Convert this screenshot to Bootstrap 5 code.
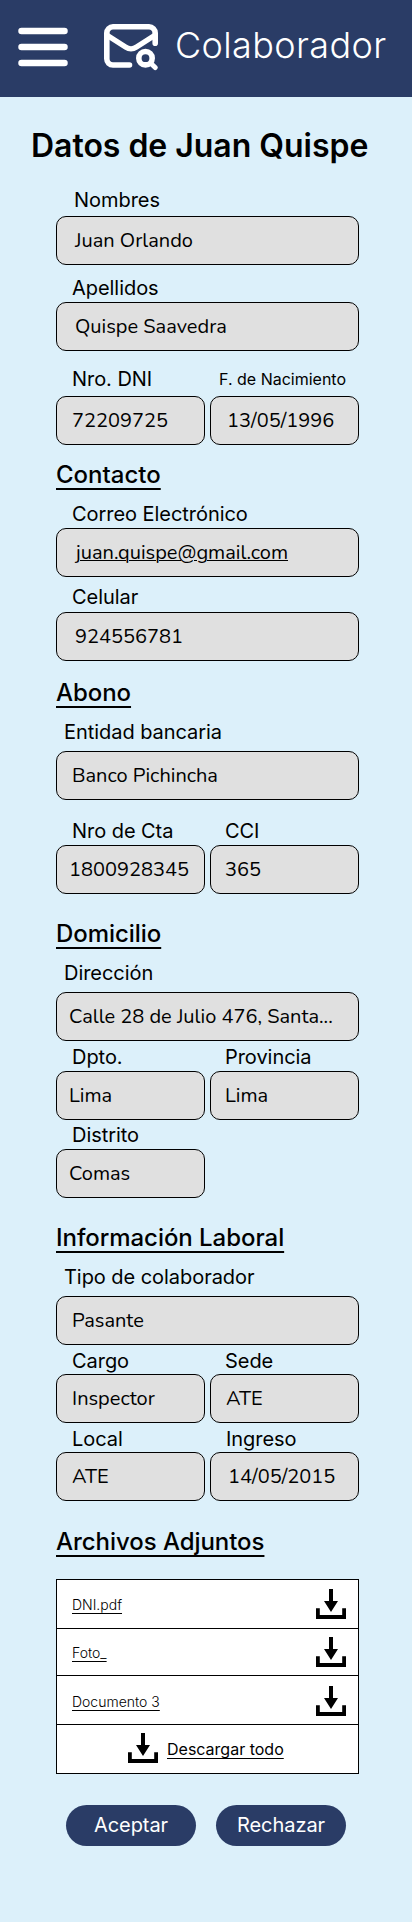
<!DOCTYPE html>
<html lang="es">
<head>
<meta charset="utf-8">
<meta name="viewport" content="width=device-width, initial-scale=1">
<title>Colaborador</title>
<link href="https://cdn.jsdelivr.net/npm/bootstrap@5.3.0/dist/css/bootstrap.min.css" rel="stylesheet">
<style>
  body { background: #dcf0fa; color: #000; font-family: Inter, "Liberation Sans", sans-serif; font-optical-sizing: none; min-height: 1922px; }
  .topbar { background: #2a3c66; height: 97px; }
  .burger { margin: 26px 0 0 18px; }
  .mail { margin: 24px 0 0 36px; }
  .brand-title { font-size: 36px; font-weight: 300; line-height: 44px; letter-spacing: .37px; margin: 23px 0 0 17px; }
  .page-title { font-size: 32px; font-weight: 600; line-height: 39px; letter-spacing: -.03px; margin: 29px 0 23px 31px; white-space: nowrap; }
  .sheet { width: 303px; margin-left: 56px; }
  .half { width: 149px; }
  .section-title { font-size: 24px; font-weight: 500; line-height: 29px; letter-spacing: -.05px; margin: 25px 0 13px; text-decoration: underline; text-decoration-thickness: 1.6px; text-underline-offset: 4.5px; white-space: nowrap; }
  .title-contact { margin-top: 15px; letter-spacing: 0; }
  .title-payment { margin-top: 17px; }
  .title-files { margin: 26px 0 23px; }
  .lbl { display: block; font-size: 20px; font-weight: 370; line-height: 24px; letter-spacing: -.05px; padding-left: 16px; margin-bottom: 2px; white-space: nowrap; }
  .lbl-in { padding-left: 8px; margin-bottom: 7px; }
  .lbl-first { padding-left: 18px; margin-bottom: 4px; }
  .half + .half .lbl { padding-left: 15px; }
  .half + .half .lbl-entry { padding-left: 16px; }
  .half + .half .lbl-small { font-size: 16px; font-weight: 400; padding-left: 9px; letter-spacing: 0; }
  .tight .lbl { margin-bottom: 1px; }
  .loose .lbl { margin-bottom: 5px; }
  .phone .lbl { margin-bottom: 3px; }
  .box { height: 49px; line-height: 47px; border: 1px solid #000; border-radius: 10px; background: #e0e0e0; font-family: Nunito, Lato, sans-serif; font-size: 20px; padding-left: 15px; white-space: nowrap; overflow: hidden; }
  .half + .half .box { padding-left: 14px; }
  .box.in-12 { padding-left: 12px; }
  .box.in-18 { padding-left: 18px; }
  .box.in-19 { padding-left: 19px; }
  .half + .half .box.in-15 { padding-left: 15px; }
  .half + .half .box.in-16 { padding-left: 16px; }
  .half + .half .box.in-17 { padding-left: 17px; }
  .mail-link { text-decoration: underline; text-decoration-thickness: 1px; }
  .gap-t3 { margin-top: 3px; }
  .gap-t4 { margin-top: 4px; }
  .gap-t8 { margin-top: 8px; }
  .gap-t11 { margin-top: 11px; }
  .gap-t16 { margin-top: 16px; }
  .gap-t19 { margin-top: 19px; }
  .files { border: 1px solid #000; background: #fff; }
  .file-row { height: 49px; border-bottom: 1px solid #000; padding: 0 12px 0 15px; font-size: 14px; font-weight: 300; }
  .file-row.short { height: 47px; }
  .file-row.lower { padding-top: 2px; }
  .file-row a, .all-row a { color: #000; text-decoration-thickness: 1px; text-underline-offset: 2.5px; }
  .all-row { height: 48px; font-size: 16px; padding-left: 71px; }
  .all-row svg { margin-bottom: 2px; }
  .all-row a { margin-left: 9px; }
  .actions { gap: 20px; margin: 31px 0 0 66px; }
  .act { width: 130px; height: 41px; border: 0; border-radius: 20.5px; padding: 0; background: #2a3c66; color: #fff; font-size: 20px; font-weight: 370; line-height: 41px; letter-spacing: -.05px; }
  .act:hover { background: #35497a; color: #fff; }
</style>
</head>
<body>
<svg class="d-none" xmlns="http://www.w3.org/2000/svg">
  <symbol id="download" viewBox="0 0 30 30">
    <path d="M13 0h4v12h5l-7 11-7-11h5zM0 19.300h3.800V26h22.400v-6.700H30V30H0z"/>
  </symbol>
</svg>

<header class="topbar d-flex align-items-start text-white">
  <svg class="burger flex-shrink-0" width="50" height="42" viewBox="0 0 50 42" stroke="#fff" stroke-width="6.5" stroke-linecap="round"><path d="M3.500 5h43M3.500 21h43M3.500 37h43"/></svg>
  <svg class="mail flex-shrink-0" width="54" height="47" viewBox="0 0 54 47" fill="none" stroke="#fff" stroke-width="5.600" stroke-linecap="round" stroke-linejoin="round">
    <path d="M25.500 41H9a6.200 6.200 0 0 1-6.200-6.200V9A6.200 6.200 0 0 1 9 2.800h36A6.200 6.200 0 0 1 51.200 9v10.200"/>
    <path d="M3.500 11.500L21.500 23q5.500 3.700 11 0L50.500 11.500" stroke-width="5.200"/>
    <circle cx="41.500" cy="34.200" r="6.700"/><path d="M47 39.500l4.200 4" stroke-width="5"/>
  </svg>
  <div class="brand-title">Colaborador</div>
</header>

<main>
  <h1 class="page-title">Datos de Juan Quispe</h1>
  <div class="sheet">
    <span class="lbl lbl-first">Nombres</span>
    <div class="box in-18">Juan Orlando</div>
    <div class="gap-t11">
      <span class="lbl">Apellidos</span>
      <div class="box in-18">Quispe Saavedra</div>
    </div>
    <div class="d-flex justify-content-between gap-t16 loose">
      <div class="half"><span class="lbl">Nro. DNI</span><div class="box">72209725</div></div>
      <div class="half"><span class="lbl lbl-small">F. de Nacimiento</span><div class="box in-16">13/05/1996</div></div>
    </div>

    <h2 class="section-title title-contact">Contacto</h2>
    <span class="lbl">Correo Electrónico</span>
    <div class="box in-19"><span class="mail-link">juan.quispe@gmail.com</span></div>
    <div class="gap-t8 phone">
      <span class="lbl">Celular</span>
      <div class="box in-18">924556781</div>
    </div>

    <h2 class="section-title title-payment">Abono</h2>
    <span class="lbl lbl-in">Entidad bancaria</span>
    <div class="box">Banco Pichincha</div>
    <div class="d-flex justify-content-between gap-t19">
      <div class="half"><span class="lbl">Nro de Cta</span><div class="box in-12">1800928345</div></div>
      <div class="half"><span class="lbl">CCI</span><div class="box">365</div></div>
    </div>

    <h2 class="section-title">Domicilio</h2>
    <span class="lbl lbl-in">Dirección</span>
    <div class="box in-12">Calle 28 de Julio 476, Santa...</div>
    <div class="d-flex justify-content-between gap-t4">
      <div class="half"><span class="lbl">Dpto.</span><div class="box in-12">Lima</div></div>
      <div class="half"><span class="lbl">Provincia</span><div class="box">Lima</div></div>
    </div>
    <div class="half gap-t3"><span class="lbl">Distrito</span><div class="box in-12">Comas</div></div>

    <h2 class="section-title">Información Laboral</h2>
    <span class="lbl lbl-in">Tipo de colaborador</span>
    <div class="box">Pasante</div>
    <div class="d-flex justify-content-between gap-t4 tight">
      <div class="half"><span class="lbl">Cargo</span><div class="box">Inspector</div></div>
      <div class="half"><span class="lbl">Sede</span><div class="box in-15">ATE</div></div>
    </div>
    <div class="d-flex justify-content-between gap-t4 tight">
      <div class="half"><span class="lbl">Local</span><div class="box">ATE</div></div>
      <div class="half"><span class="lbl lbl-entry">Ingreso</span><div class="box in-17">14/05/2015</div></div>
    </div>

    <h2 class="section-title title-files">Archivos Adjuntos</h2>
    <div class="files">
      <div class="file-row d-flex align-items-center justify-content-between"><a href="#">DNI.pdf</a><svg width="30" height="30"><use href="#download"/></svg></div>
      <div class="file-row short d-flex align-items-center justify-content-between"><a href="#">Foto_</a><svg width="30" height="30"><use href="#download"/></svg></div>
      <div class="file-row lower d-flex align-items-center justify-content-between"><a href="#">Documento 3</a><svg width="30" height="30"><use href="#download"/></svg></div>
      <div class="all-row d-flex align-items-center"><svg width="30" height="30"><use href="#download"/></svg><a href="#">Descargar todo</a></div>
    </div>
  </div>
  <div class="actions d-flex">
    <button class="btn act">Aceptar</button>
    <button class="btn act">Rechazar</button>
  </div>
</main>
<script src="https://cdn.jsdelivr.net/npm/bootstrap@5.3.0/dist/js/bootstrap.bundle.min.js"></script>
</body>
</html>
